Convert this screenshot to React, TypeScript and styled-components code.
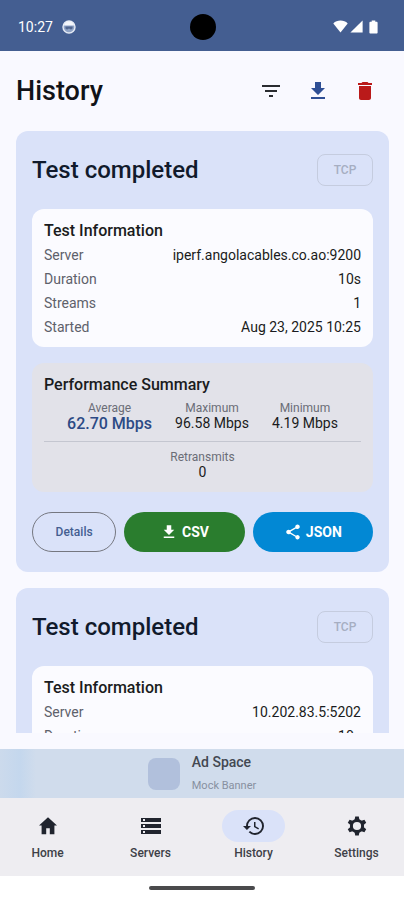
import React from 'react';
import styled, { createGlobalStyle } from 'styled-components';
import {
  MdFileDownload,
  MdDelete,
  MdFilterList,
  MdHistory,
  MdShare,
  MdStorage,
} from 'react-icons/md';

const GlobalStyle = createGlobalStyle`
  *, *::before, *::after { box-sizing: border-box; }
  body {
    margin: 0;
    background: #ffffff;
    font-family: Roboto, "Liberation Sans", sans-serif;
    color: #1a1b20;
  }
  h1, h2, h3, p, dl, dt, dd { margin: 0; }
  button { font-family: inherit; cursor: pointer; }
  svg { display: block; }
`;

const Screen = styled.div`
  display: flex;
  flex-direction: column;
  height: 100vh;
  background: #f9f9ff;
`;

const StatusBar = styled.div`
  display: grid;
  grid-template-columns: 1fr auto 1fr;
  align-items: center;
  flex: none;
  height: 51px;
  padding: 2px 25px 0 18px;
  background: #445e91;
  color: #ffffff;
`;

const Clock = styled.div`
  display: flex;
  align-items: center;
  gap: 9px;
  font-size: 14px;
  line-height: 20px;
`;

const Camera = styled.div`
  width: 26px;
  height: 26px;
  margin-left: 8px;
  border-radius: 50%;
  background: #000000;
`;

const Signals = styled.div`
  display: flex;
  justify-content: flex-end;
  align-items: center;
  gap: 2px;
`;

const TopBar = styled.header`
  display: flex;
  align-items: center;
  justify-content: space-between;
  flex: none;
  height: 80px;
  padding: 0 16px;
`;

const PageTitle = styled.h1`
  font-size: 27px;
  line-height: 32px;
  font-weight: 500;
  color: #111318;
`;

const Actions = styled.div`
  display: flex;
`;

const IconButton = styled.button<{ $color: string }>`
  display: flex;
  align-items: center;
  justify-content: center;
  width: 47px;
  height: 48px;
  padding: 0;
  border: 0;
  background: none;
  color: ${(p) => p.$color};
`;

const List = styled.main`
  display: flex;
  flex-direction: column;
  gap: 16px;
  flex: 1;
  min-height: 0;
  margin: 0 15px 16px 16px;
  overflow: hidden;
`;

const Card = styled.article`
  flex: none;
  padding: 0 16px 20px;
  border-radius: 12px;
  background: #dae2f9;
`;

const CardHeader = styled.div`
  display: flex;
  align-items: center;
  justify-content: space-between;
  height: 78px;
`;

const CardTitle = styled.h2`
  font-size: 24px;
  line-height: 28px;
  font-weight: 500;
  color: #111a2c;
`;

const Chip = styled.button`
  width: 56px;
  height: 32px;
  padding: 0;
  border: 1px solid #c5ccdf;
  border-radius: 8px;
  background: none;
  font-size: 12px;
  font-weight: 500;
  color: #a6aec2;
`;

const Panel = styled.section<{ $tone: string }>`
  padding: 10px 12px 8px;
  border-radius: 12px;
  background: ${(p) => p.$tone};

  & + & { margin-top: 16px; }
`;

const PanelTitle = styled.h3`
  font-size: 16px;
  line-height: 24px;
  font-weight: 500;
  color: #1a1b20;
`;

const Row = styled.div`
  display: flex;
  justify-content: space-between;
  align-items: center;
  font-size: 14px;
  line-height: 24px;

  dt { color: #5e616b; }
  dd { color: #1a1b20; }
`;

const Stats = styled.dl`
  display: flex;
  justify-content: space-evenly;
  padding: 4px 0 9px;

  & + & {
    padding: 8px 0 3px;
    border-top: 1px solid #c4c6d0;
  }
`;

const Stat = styled.div<{ $strong?: boolean }>`
  text-align: center;

  dt {
    font-size: 12px;
    line-height: 14px;
    color: #6a6d77;
  }
  dd {
    font-size: ${(p) => (p.$strong ? 16 : 14)}px;
    line-height: 17px;
    font-weight: ${(p) => (p.$strong ? 500 : 400)};
    color: ${(p) => (p.$strong ? '#2c4a85' : '#1a1b20')};
  }
`;

const Buttons = styled.div`
  display: grid;
  grid-template-columns: 7fr 10fr 10fr;
  gap: 8px;
  margin-top: 20px;
`;

const Pill = styled.button<{ $fill?: string }>`
  display: flex;
  align-items: center;
  justify-content: center;
  gap: 4px;
  height: 40px;
  padding: 0;
  border: ${(p) => (p.$fill ? '0' : '1px solid #757780')};
  border-radius: 20px;
  background: ${(p) => p.$fill ?? 'none'};
  font-size: ${(p) => (p.$fill ? 14 : 12)}px;
  font-weight: ${(p) => (p.$fill ? 700 : 500)};
  color: ${(p) => (p.$fill ? '#ffffff' : '#445e91')};
`;

const Banner = styled.aside`
  display: flex;
  align-items: center;
  justify-content: center;
  gap: 12px;
  flex: none;
  height: 49px;
  background: linear-gradient(90deg, #ccdaec 0, #c4d7ed 20px, #d0dcec 36px);
`;

const BannerImage = styled.div`
  width: 32px;
  height: 32px;
  border-radius: 8px;
  background: #b1c0dc;
`;

const BannerTitle = styled.p`
  font-size: 14px;
  line-height: 24px;
  font-weight: 500;
  color: #434852;
`;

const BannerText = styled.p`
  font-size: 11px;
  line-height: 24px;
  color: #8790a0;
`;

const NavBar = styled.nav`
  display: grid;
  grid-template-columns: repeat(4, 1fr);
  gap: 8px;
  flex: none;
  height: 78px;
  padding-top: 12px;
  background: #eeedf1;
`;

const NavItem = styled.button`
  display: flex;
  flex-direction: column;
  align-items: center;
  gap: 3px;
  padding: 0;
  border: 0;
  background: none;
  font-size: 12px;
  line-height: 16px;
  font-weight: 500;
  color: #3d3f47;
`;

const Indicator = styled.span<{ $active: boolean }>`
  display: flex;
  align-items: center;
  justify-content: center;
  width: 63px;
  height: 32px;
  border-radius: 16px;
  background: ${(p) => (p.$active ? '#dae2f9' : 'transparent')};
  color: #20242e;
`;

const GestureBar = styled.div`
  display: flex;
  align-items: center;
  justify-content: center;
  flex: none;
  height: 24px;
  background: #ffffff;

  &::after {
    content: '';
    width: 106px;
    height: 4px;
    border-radius: 2px;
    background: #4a4a4c;
  }
`;

interface SpeedStat {
  label: string;
  value: string;
  strong?: boolean;
}

interface Test {
  server: string;
  duration: string;
  streams: string;
  started: string;
  speeds: SpeedStat[];
  retransmits: string;
}

const tests: Test[] = [
  {
    server: 'iperf.angolacables.co.ao:9200',
    duration: '10s',
    streams: '1',
    started: 'Aug 23, 2025 10:25',
    speeds: [
      { label: 'Average', value: '62.70 Mbps', strong: true },
      { label: 'Maximum', value: '96.58 Mbps' },
      { label: 'Minimum', value: '4.19 Mbps' },
    ],
    retransmits: '0',
  },
  {
    server: '10.202.83.5:5202',
    duration: '10s',
    streams: '',
    started: '',
    speeds: [],
    retransmits: '',
  },
];

function HomeIcon({ size }: { size: number }) {
  return (
    <svg width={size} height={size} viewBox="0 0 24 24" fill="currentColor">
      <path d="M12 3.2 3 11.6h2.6v8.6h4.6v-6h3.6v6h4.6v-8.6H21z" />
    </svg>
  );
}

const toothAngles = [0, 60, 120, 180, 240, 300];

function GearIcon({ size }: { size: number }) {
  return (
    <svg width={size} height={size} viewBox="0 0 24 24" fill="currentColor">
      <circle cx="12" cy="12" r="5.6" fill="none" stroke="currentColor" strokeWidth="3" />
      {toothAngles.map((angle) => (
        <path key={angle} d="M10.2 2.4h3.6l.7 3.8h-5z" transform={`rotate(${angle} 12 12)`} />
      ))}
    </svg>
  );
}

const navItems = [
  { label: 'Home', Icon: HomeIcon },
  { label: 'Servers', Icon: MdStorage },
  { label: 'History', Icon: MdHistory },
  { label: 'Settings', Icon: GearIcon },
];

function TestCard({ test }: { test: Test }) {
  const rows = [
    ['Server', test.server],
    ['Duration', test.duration],
    ['Streams', test.streams],
    ['Started', test.started],
  ].filter(([, value]) => value);

  return (
    <Card>
      <CardHeader>
        <CardTitle>Test completed</CardTitle>
        <Chip>TCP</Chip>
      </CardHeader>
      <Panel $tone="#fbfbff">
        <PanelTitle>Test Information</PanelTitle>
        <dl>
          {rows.map(([label, value]) => (
            <Row key={label}>
              <dt>{label}</dt>
              <dd>{value}</dd>
            </Row>
          ))}
        </dl>
      </Panel>
      {test.speeds.length > 0 && (
        <>
          <Panel $tone="#e2e2e9">
            <PanelTitle>Performance Summary</PanelTitle>
            <Stats>
              {test.speeds.map((s) => (
                <Stat key={s.label} $strong={s.strong}>
                  <dt>{s.label}</dt>
                  <dd>{s.value}</dd>
                </Stat>
              ))}
            </Stats>
            <Stats>
              <Stat>
                <dt>Retransmits</dt>
                <dd>{test.retransmits}</dd>
              </Stat>
            </Stats>
          </Panel>
          <Buttons>
            <Pill>Details</Pill>
            <Pill $fill="#2a7d2e">
              <MdFileDownload size={18} />
              CSV
            </Pill>
            <Pill $fill="#0288d4">
              <MdShare size={18} />
              JSON
            </Pill>
          </Buttons>
        </>
      )}
    </Card>
  );
}

export default function App() {
  return (
    <>
      <GlobalStyle />
      <Screen>
        <StatusBar>
          <Clock>
            10:27
            <svg width="14" height="14" viewBox="0 0 14 14" fill="none">
              <circle cx="7" cy="7" r="6" fill="#8fa3c6" stroke="#e6ebf5" strokeWidth="1.4" />
              <path d="M1.6 5.4C3 2.2 5 1.2 7 1.2s4 1 5.4 4.2z" fill="#f4f6fb" />
              <path d="M3.4 6.6h7.2v1.2c0 1-.8 1.6-1.8 1.6L7 8.6l-1.8.8c-1 0-1.8-.6-1.8-1.6z" fill="#50658f" />
            </svg>
          </Clock>
          <Camera />
          <Signals>
            <svg width="15" height="13" viewBox="0 0 15 13" fill="#fff">
              <path d="M7.5 12.6.3 3.4C2.2 1.6 4.7.6 7.5.6s5.3 1 7.2 2.8z" />
            </svg>
            <svg width="13" height="13" viewBox="0 0 13 13" fill="#fff">
              <path d="M12.6.4v12.2H.4z" />
            </svg>
            <svg width="14" height="14" viewBox="0 0 14 14" fill="#fff">
              <path d="M6.7.4h3.6v1.4h1.2c.7 0 1.1.5 1.1 1.1v9.5c0 .7-.4 1.2-1.1 1.2h-6c-.7 0-1.1-.5-1.1-1.2V2.9c0-.6.4-1.1 1.1-1.1h1.2z" />
            </svg>
          </Signals>
        </StatusBar>

        <TopBar>
          <PageTitle>History</PageTitle>
          <Actions>
            <IconButton $color="#2a2c30" aria-label="Filter">
              <MdFilterList size={24} />
            </IconButton>
            <IconButton $color="#2f4f95" aria-label="Download all">
              <MdFileDownload size={24} />
            </IconButton>
            <IconButton $color="#ba1a1a" aria-label="Delete all">
              <MdDelete size={24} />
            </IconButton>
          </Actions>
        </TopBar>

        <List>
          {tests.map((test) => (
            <TestCard key={test.server} test={test} />
          ))}
        </List>

        <Banner>
          <BannerImage />
          <div>
            <BannerTitle>Ad Space</BannerTitle>
            <BannerText>Mock Banner</BannerText>
          </div>
        </Banner>

        <NavBar>
          {navItems.map(({ label, Icon }) => (
            <NavItem key={label} aria-current={label === 'History' ? 'page' : undefined}>
              <Indicator $active={label === 'History'}>
                <Icon size={24} />
              </Indicator>
              {label}
            </NavItem>
          ))}
        </NavBar>
        <GestureBar />
      </Screen>
    </>
  );
}
